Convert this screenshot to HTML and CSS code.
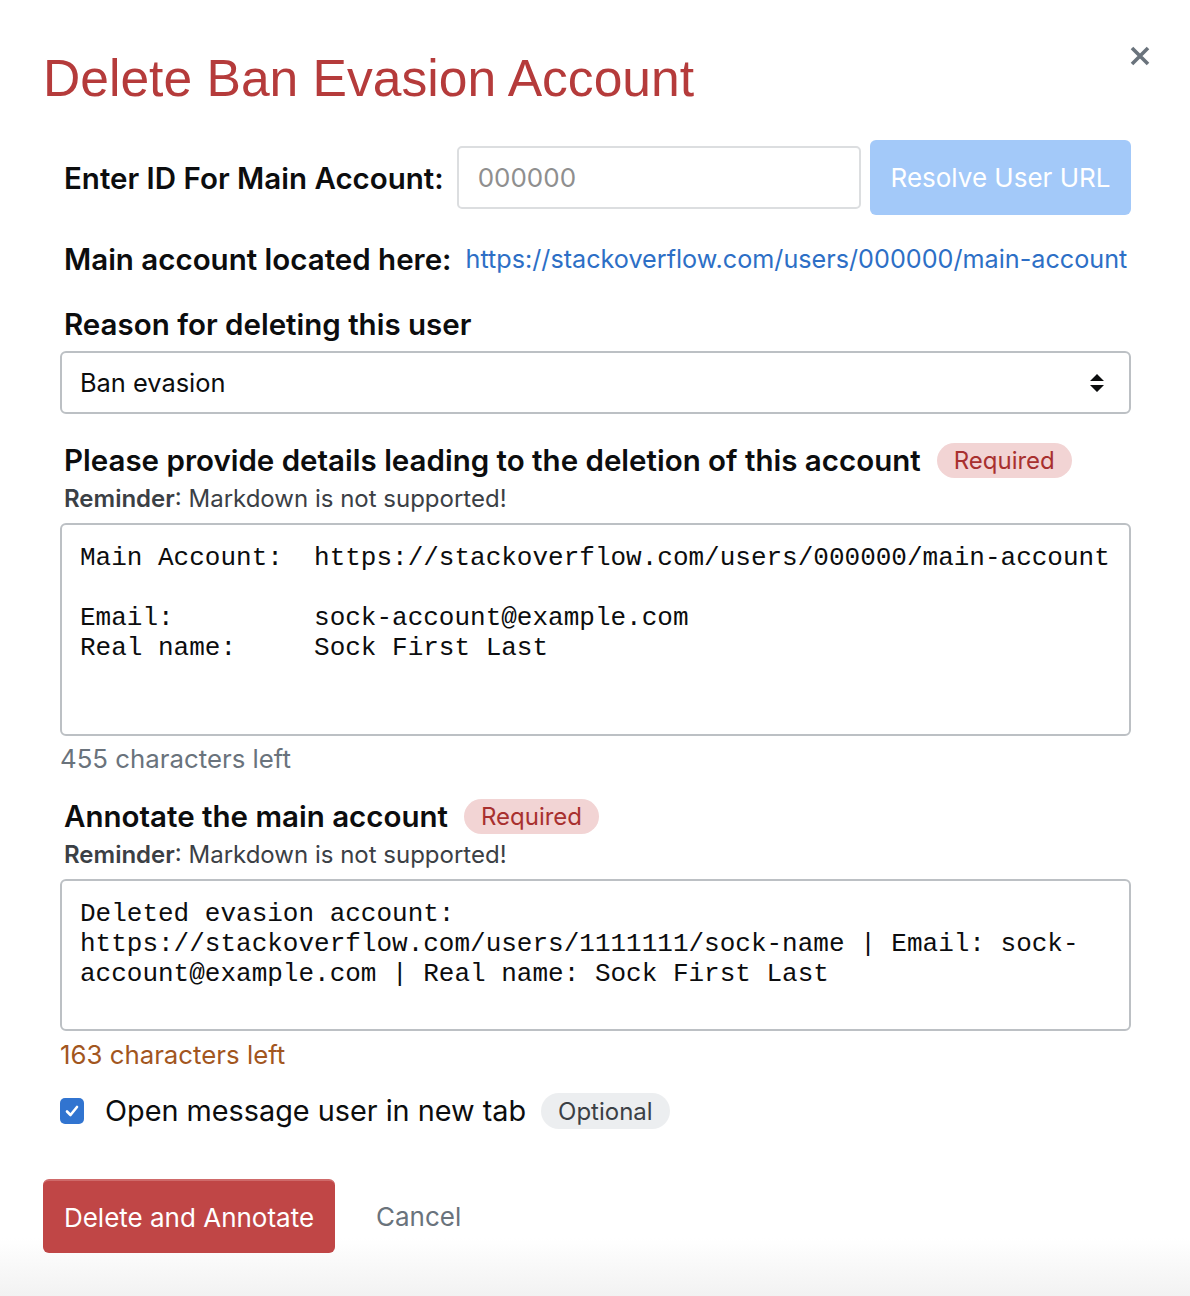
FILE: index.html
```html
<!DOCTYPE html>
<html lang="en">
<head>
<meta charset="utf-8">
<title>Delete Ban Evasion Account</title>
<link rel="stylesheet" href="styles.css">
</head>
<body>
<div class="modal">
  <button class="close" aria-label="Close">
    <svg width="22" height="22" viewBox="0 0 22 22"><path d="M3 3 L19 19 M19 3 L3 19" stroke="#6a737c" stroke-width="3.6" stroke-linecap="butt" fill="none"/></svg>
  </button>
  <h1 class="title">Delete Ban Evasion Account</h1>
  <form class="form">
    <div class="id-row">
      <label class="label" for="main-id">Enter ID For Main Account:</label>
      <input id="main-id" class="id-input" type="text" placeholder="000000">
      <button type="button" class="btn-resolve">Resolve User URL</button>
    </div>
    <div class="link-row">
      <span class="label">Main account located here:</span>
      <a class="link" href="#">https://stackoverflow.com/users/000000/main-account</a>
    </div>
    <div class="label reason-label">Reason for deleting this user</div>
    <div class="select">
      <span>Ban evasion</span>
      <svg width="16" height="20" viewBox="0 0 16 20"><path d="M8 1 L15 8 L1 8 Z M1 12 L15 12 L8 19 Z" fill="#0c0d0e"/></svg>
    </div>
    <div class="heading-row details-head">
      <span class="label">Please provide details leading to the deletion of this account</span>
      <span class="badge badge-req">Required</span>
    </div>
    <div class="reminder"><b>Reminder</b>: Markdown is not supported!</div>
    <textarea class="textarea ta-details" readonly>Main Account:  https://stackoverflow.com/users/000000/main-account

Email:         sock-account@example.com
Real name:     Sock First Last</textarea>
    <div class="counter">455 characters left</div>
    <div class="heading-row annotate-head">
      <span class="label">Annotate the main account</span>
      <span class="badge badge-req">Required</span>
    </div>
    <div class="reminder"><b>Reminder</b>: Markdown is not supported!</div>
    <textarea class="textarea ta-annotate" readonly>Deleted evasion account: https://stackoverflow.com/users/1111111/sock-name | Email: sock-account@example.com | Real name: Sock First Last</textarea>
    <div class="counter counter-warn">163 characters left</div>
    <div class="check-row">
      <span class="checkbox"><svg width="16" height="16" viewBox="0 0 16 16"><path d="M3 8.5 L6.5 12 L13 4" stroke="#fff" stroke-width="2.6" fill="none" stroke-linecap="round" stroke-linejoin="round"/></svg></span>
      <span class="check-label">Open message user in new tab</span>
      <span class="badge badge-opt">Optional</span>
    </div>
  </form>
  <div class="actions">
    <button type="button" class="btn-delete">Delete and Annotate</button>
    <button type="button" class="btn-cancel">Cancel</button>
  </div>
</div>
</body>
</html>
```
FILE: styles.css
```css
* { box-sizing: border-box; }
html, body { margin: 0; padding: 0; }
body {
  font-family: Inter, "Noto Sans", sans-serif;
  color: #0c0d0e;
  background: #fff;
}
.modal {
  position: relative;
  min-height: 1296px;
  padding: 48px 59px 0 43px;
  background: linear-gradient(to bottom, #fff 0, #fff 1238px, #f2f2f2 1296px);
}
.close {
  position: absolute;
  left: 1129px;
  top: 45px;
  width: 22px;
  height: 22px;
  padding: 0;
  border: 0;
  background: none;
  display: flex;
}
.title {
  margin: 0;
  font-family: "Liberation Sans", Arial, sans-serif;
  font-weight: 400;
  font-size: 51.6px;
  line-height: 60px;
  color: #b53b3b;
}
.form {
  margin-left: 17px;
  display: flex;
  flex-direction: column;
}
.label {
  font-weight: 600;
  font-size: 29.5px;
  line-height: 40px;
  padding-left: 4px;
  color: #0c0d0e;
  white-space: nowrap;
}
.id-row {
  margin-top: 32px;
  display: flex;
  align-items: center;
  height: 75px;
}
.id-input {
  flex: 1;
  min-width: 0;
  margin-left: 13px;
  height: 63px;
  border: 2px solid #dcdee0;
  border-radius: 5px;
  padding: 0 19px;
  font-family: Inter, sans-serif;
  font-size: 26px;
  color: #0c0d0e;
}
.id-input::placeholder { color: #8f8f8f; }
.btn-resolve {
  margin-left: 9px;
  width: 261px;
  height: 75px;
  border: 0;
  border-radius: 6px;
  background: #a3c9f9;
  color: #fff;
  font-family: Inter, sans-serif;
  font-size: 26px;
}
.link-row {
  margin-top: 24px;
  display: flex;
  align-items: center;
  gap: 14px;
}
.link {
  font-size: 25.2px;
  line-height: 40px;
  color: #2d6fc6;
  text-decoration: none;
  white-space: nowrap;
}
.reason-label { margin-top: 25px; }
.select {
  margin-top: 7px;
  height: 63px;
  border: 2px solid #bcc0c4;
  border-radius: 6px;
  display: flex;
  align-items: center;
  justify-content: space-between;
  padding: 0 24px 0 18px;
  font-size: 25.4px;
}
.heading-row {
  display: flex;
  align-items: center;
  gap: 16px;
}
.details-head { margin-top: 26px; }
.annotate-head { margin-top: 21px; }
.badge {
  display: inline-flex;
  align-items: center;
  height: 35px;
  padding: 0 17px;
  border-radius: 18px;
  font-size: 24px;
}
.badge-req { background: #f2d4d4; color: #a8302f; }
.badge-opt { background: #eceef0; color: #3b4045; height: 36px; }
.reminder {
  margin-top: 3px;
  padding-left: 4px;
  font-size: 24px;
  line-height: 32px;
  color: #3b4045;
}
.reminder b { font-weight: 600; }
.textarea {
  display: block;
  margin-top: 8px;
  width: 100%;
  border: 2px solid #bcc0c4;
  border-radius: 6px;
  padding: 18px 10px 0 18px;
  font-family: "Liberation Mono", "Courier New", monospace;
  font-size: 26px;
  line-height: 30px;
  color: #0c0d0e;
  resize: none;
  overflow: hidden;
  background: #fff;
}
.ta-details { height: 213px; }
.ta-annotate { height: 152px; }
.counter {
  margin-top: 7px;
  font-size: 25.8px;
  line-height: 32px;
  color: #6a737c;
}
.counter-warn { margin-top: 8px; color: #a2561e; }
.check-row {
  margin-top: 20px;
  height: 40px;
  display: flex;
  align-items: center;
}
.checkbox {
  width: 24px;
  height: 26px;
  border-radius: 5px;
  background: #3174d0;
  display: flex;
  align-items: center;
  justify-content: center;
}
.check-label {
  margin-left: 21px;
  font-size: 28.8px;
  line-height: 40px;
}
.badge-opt { margin-left: 15px; }
.actions {
  margin-top: 48px;
  display: flex;
  align-items: center;
}
.btn-delete {
  width: 292px;
  height: 74px;
  border: 0;
  border-top: 2px solid #cf6a6a;
  border-radius: 6px;
  background: #c04646;
  color: #fff;
  font-family: Inter, sans-serif;
  font-size: 26px;
  padding: 0;
}
.btn-cancel {
  margin-left: 22px;
  padding: 0 19px;
  height: 74px;
  border: 0;
  background: none;
  color: #6a737c;
  font-family: Inter, sans-serif;
  font-size: 26px;
}
```
